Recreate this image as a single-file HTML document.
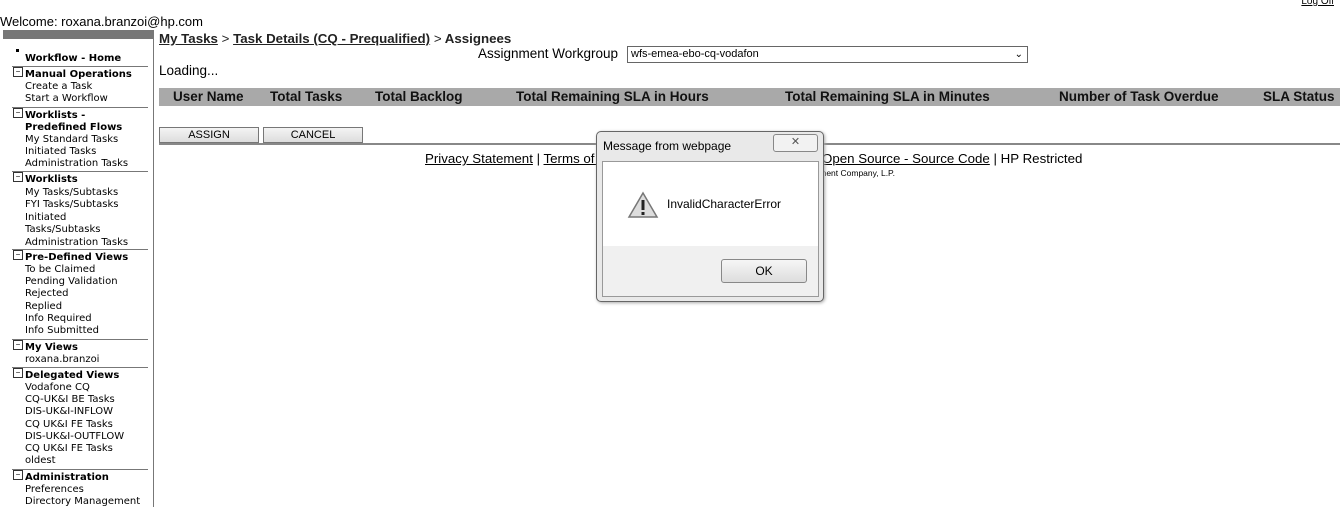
<!DOCTYPE html>
<html><head><style>
body{margin:0;width:1340px;height:507px;background:#fff;position:relative;overflow:hidden;font-family:"Liberation Sans",Arial,sans-serif;color:#000}
.a{position:absolute;white-space:nowrap}
.s{font-family:"DejaVu Sans",Verdana,sans-serif;font-size:10px;line-height:12px;left:25px}
.b{font-weight:bold}
.ln{position:absolute;left:12px;width:136px;height:1px;background:#777}
.bx{position:absolute;left:13px;width:8px;height:8px;border:1px solid #333;font-size:8px;line-height:7px;text-align:center}
.th{position:absolute;top:88px;height:18px;line-height:18px;font-weight:bold;font-size:13.5px;color:#111}
.btn{position:absolute;top:127px;height:14px;border:1px solid #777;background:linear-gradient(#f4f4f4,#ddd);font-size:11px;text-align:center;line-height:14px}
u{text-decoration:underline}
.sd{position:absolute;left:0;top:2px;width:160px;height:507px}
</style></head><body>
<div class="a" style="left:0;top:14px;font-size:13px">Welcome: roxana.branzoi@hp.com</div>
<div class="a" style="right:6px;top:-4px;font-size:10px"><u>Log Off</u></div>
<div class="a" style="left:3px;top:30px;width:150px;height:9px;background:#777"></div>
<div class="a" style="left:153px;top:30px;width:1px;height:477px;background:#777"></div>
<div class="sd">
<div class="a" style="left:16px;top:47px;width:3px;height:3px;background:#000"></div>
<div class="a s b" style="top:51px">Workflow - Home</div>
<div class="ln" style="top:64px"></div><div class="bx" style="top:65px">−</div>
<div class="a s b" style="top:67px">Manual Operations</div>
<div class="a s" style="top:79px">Create a Task<br>Start a Workflow</div>
<div class="ln" style="top:105px"></div><div class="bx" style="top:106px">−</div>
<div class="a s b" style="top:108px">Worklists -<br>Predefined Flows</div>
<div class="a s" style="top:132px">My Standard Tasks<br>Initiated Tasks<br>Administration Tasks</div>
<div class="ln" style="top:169px"></div><div class="bx" style="top:170px">−</div>
<div class="a s b" style="top:172px">Worklists</div>
<div class="a s" style="top:185px;line-height:12.4px">My Tasks/Subtasks<br>FYI Tasks/Subtasks<br>Initiated<br>Tasks/Subtasks<br>Administration Tasks</div>
<div class="ln" style="top:247px"></div><div class="bx" style="top:248px">−</div>
<div class="a s b" style="top:250px">Pre-Defined Views</div>
<div class="a s" style="top:262px;line-height:12.2px">To be Claimed<br>Pending Validation<br>Rejected<br>Replied<br>Info Required<br>Info Submitted</div>
<div class="ln" style="top:337px"></div><div class="bx" style="top:338px">−</div>
<div class="a s b" style="top:340px">My Views</div>
<div class="a s" style="top:352px">roxana.branzoi</div>
<div class="ln" style="top:365px"></div><div class="bx" style="top:366px">−</div>
<div class="a s b" style="top:368px">Delegated Views</div>
<div class="a s" style="top:380px;line-height:12.2px">Vodafone CQ<br>CQ-UK&amp;I BE Tasks<br>DIS-UK&amp;I-INFLOW<br>CQ UK&amp;I FE Tasks<br>DIS-UK&amp;I-OUTFLOW<br>CQ UK&amp;I FE Tasks<br>oldest</div>
<div class="ln" style="top:467px"></div><div class="bx" style="top:468px">−</div>
<div class="a s b" style="top:470px">Administration</div>
<div class="a s" style="top:482px">Preferences<br>Directory Management</div>
</div>

<div class="a" style="left:159px;top:31px;font-size:13.3px;font-weight:bold;color:#222"><u>My Tasks</u> <span style="font-weight:normal">&gt;</span> <u>Task Details (CQ - Prequalified)</u> <span style="font-weight:normal">&gt;</span> Assignees</div>
<div class="a" style="left:478px;top:46px;font-size:13.5px">Assignment Workgroup</div>
<div class="a" style="left:627px;top:46px;width:396px;height:15px;border:1px solid #666;font-size:11px;line-height:15px;padding-left:3px">wfs-emea-ebo-cq-vodafon<span style="position:absolute;right:4px;top:0;font-size:10px">&#8964;</span></div>
<div class="a" style="left:159px;top:63px;font-size:13.5px">Loading...</div>
<div class="a" style="left:159px;top:88px;width:1181px;height:18px;background:#a9a9a9"></div>
<div class="th" style="left:173px">User Name</div>
<div class="th" style="left:270px">Total Tasks</div>
<div class="th" style="left:375px">Total Backlog</div>
<div class="th" style="left:516px">Total Remaining SLA in Hours</div>
<div class="th" style="left:785px">Total Remaining SLA in Minutes</div>
<div class="th" style="left:1059px">Number of Task Overdue</div>
<div class="th" style="left:1263px">SLA Status</div>
<div class="btn" style="left:159px;width:98px">ASSIGN</div>
<div class="btn" style="left:263px;width:98px">CANCEL</div>
<div class="a" style="left:159px;top:143px;width:1181px;height:2px;background:#888"></div>
<div class="a" style="left:425px;top:151px;font-size:13.3px"><u>Privacy Statement</u> | <u>Terms of Use</u> | <u>Feedback</u> | <u>Support</u> | <u>Reward</u></div>
<div class="a" style="left:822px;top:151px;font-size:13.3px"><u>Open Source - Source Code</u> | HP Restricted</div>
<div class="a" style="left:655px;top:168px;font-size:8.5px;width:240px;text-align:right">© 2013 Hewlett-Packard Development Company, L.P.</div>

<div class="a" style="left:596px;top:131px;width:226px;height:169px;border:1px solid #666;border-radius:5px;background:#e9e9e9;box-shadow:1px 1px 3px #aaa"></div>
<div class="a" style="left:603px;top:139px;font-size:12px">Message from webpage</div>
<div class="a" style="left:773px;top:134px;width:43px;height:16px;border:1px solid #888;border-radius:3px;background:#f2f2f2;font-size:11px;text-align:center;line-height:15px;color:#555">✕</div>
<div class="a" style="left:602px;top:161px;width:215px;height:134px;border:1px solid #999;background:#f0f0f0"></div>
<div class="a" style="left:603px;top:162px;width:215px;height:84px;background:#fff"></div>
<svg class="a" style="left:627px;top:191px" width="32" height="28"><polygon points="16,2 30,26 2,26" fill="#ddd" stroke="#777" stroke-width="1.5"/><rect x="14.5" y="9" width="3" height="10" fill="#222"/><rect x="14.5" y="21" width="3" height="3" fill="#222"/></svg>
<div class="a" style="left:667px;top:197px;font-size:12px">InvalidCharacterError</div>
<div class="a" style="left:721px;top:259px;width:84px;height:22px;border:1px solid #888;border-radius:3px;background:linear-gradient(#f6f6f6,#ddd);font-size:12px;text-align:center;line-height:22px">OK</div>
</body></html>
